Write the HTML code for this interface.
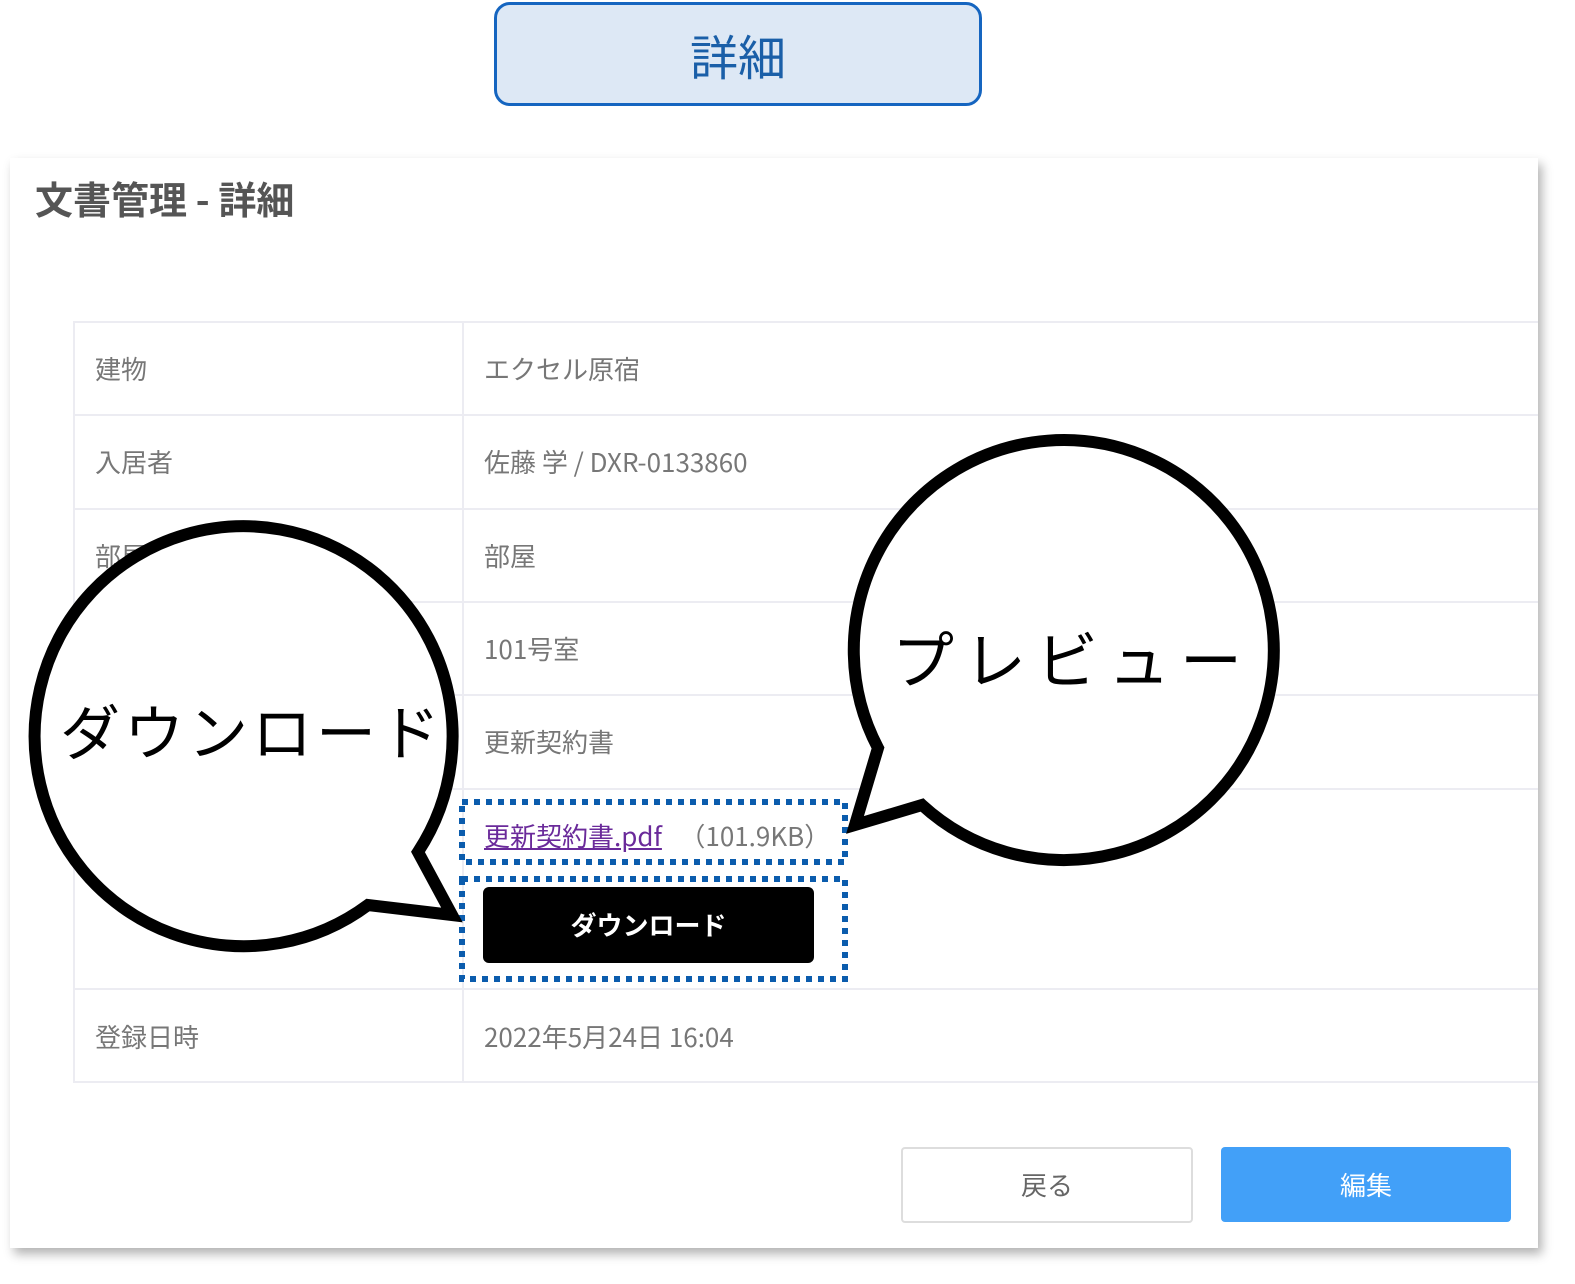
<!DOCTYPE html>
<html><head><meta charset="utf-8"><style>
body{margin:0;width:1575px;height:1284px;background:#fff;position:relative;overflow:hidden;font-family:"Noto Sans CJK JP",sans-serif;}
.abs{position:absolute}
.top{left:494px;top:2px;width:482px;height:98px;border:3px solid #1565c0;border-radius:16px;background:#dde8f5;color:#1a5fa8;font-size:48px;text-align:center;line-height:98px}
.panel{left:10px;top:158px;width:1528px;height:1090px;background:#fff;box-shadow:4px 6px 10px rgba(0,0,0,.3)}
.title{left:35px;top:172px;font-size:38px;font-weight:bold;color:#555;line-height:52px}
.hl{left:73px;height:2px;background:#ececf2;width:1465px}
.vl{top:321px;width:2px;height:762px;background:#ececf2}
.t{font-size:26px;color:#777;line-height:36px}
.btn{top:1147px;width:290px;height:75px;border-radius:4px;text-align:center;line-height:75px;font-size:26px}
</style></head><body>
<div class="abs top">詳細</div>
<div class="abs panel"></div>
<div class="abs title">文書管理 - 詳細</div>
<div class="abs hl" style="top:321px"></div>
<div class="abs hl" style="top:414px"></div>
<div class="abs hl" style="top:508px"></div>
<div class="abs hl" style="top:601px"></div>
<div class="abs hl" style="top:694px"></div>
<div class="abs hl" style="top:788px"></div>
<div class="abs hl" style="top:988px"></div>
<div class="abs hl" style="top:1081px"></div>
<div class="abs vl" style="left:73px"></div>
<div class="abs vl" style="left:462px"></div>
<div class="abs t" style="left:95px;top:351px">建物</div>
<div class="abs t" style="left:484px;top:351px">エクセル原宿</div>
<div class="abs t" style="left:95px;top:444px">入居者</div>
<div class="abs t" style="left:484px;top:444px">佐藤 学 / DXR-0133860</div>
<div class="abs t" style="left:95px;top:538px">部屋</div>
<div class="abs t" style="left:484px;top:538px">部屋</div>
<div class="abs t" style="left:484px;top:631px">101号室</div>
<div class="abs t" style="left:484px;top:724px">更新契約書</div>
<div class="abs t" style="left:484px;top:818px"><span style="color:#6a2a9a;text-decoration:underline">更新契約書.pdf</span>&nbsp;&nbsp;&nbsp;（101.9KB）</div>
<div class="abs" style="left:483px;top:887px;width:331px;height:76px;background:#000;border-radius:6px;color:#fff;font-weight:bold;font-size:26px;text-align:center;line-height:76px">ダウンロード</div>
<div class="abs t" style="left:95px;top:1019px">登録日時</div>
<div class="abs t" style="left:484px;top:1019px">2022年5月24日 16:04</div>
<div class="abs btn" style="left:901px;border:2px solid #ddd;width:288px;height:72px;line-height:72px;color:#666">戻る</div>
<div class="abs btn" style="left:1221px;background:#42a0f8;color:#fff">編集</div>
<svg class="abs" style="left:0;top:0" width="1575" height="1284">
<rect x="462" y="802" width="383" height="60" fill="none" stroke="#0b5cad" stroke-width="6" stroke-dasharray="6 6"/>
<rect x="462" y="879" width="383" height="100" fill="none" stroke="#0b5cad" stroke-width="6" stroke-dasharray="6 6"/>
<path d="M418,852 A209,210 0 1 0 368,905 L452,915 Z" fill="#fff" stroke="#000" stroke-width="12" stroke-linejoin="miter"/>
<path d="M878,748 A210,210 0 1 1 922,805 L855,825 Z" fill="#fff" stroke="#000" stroke-width="12" stroke-linejoin="miter"/>
<text x="60" y="755" font-size="60" letter-spacing="4" font-family="Noto Sans CJK JP, sans-serif">ダウンロード</text>
<text x="892" y="683" font-size="62" letter-spacing="10" font-family="Noto Sans CJK JP, sans-serif">プレビュー</text>
</svg>
</body></html>
